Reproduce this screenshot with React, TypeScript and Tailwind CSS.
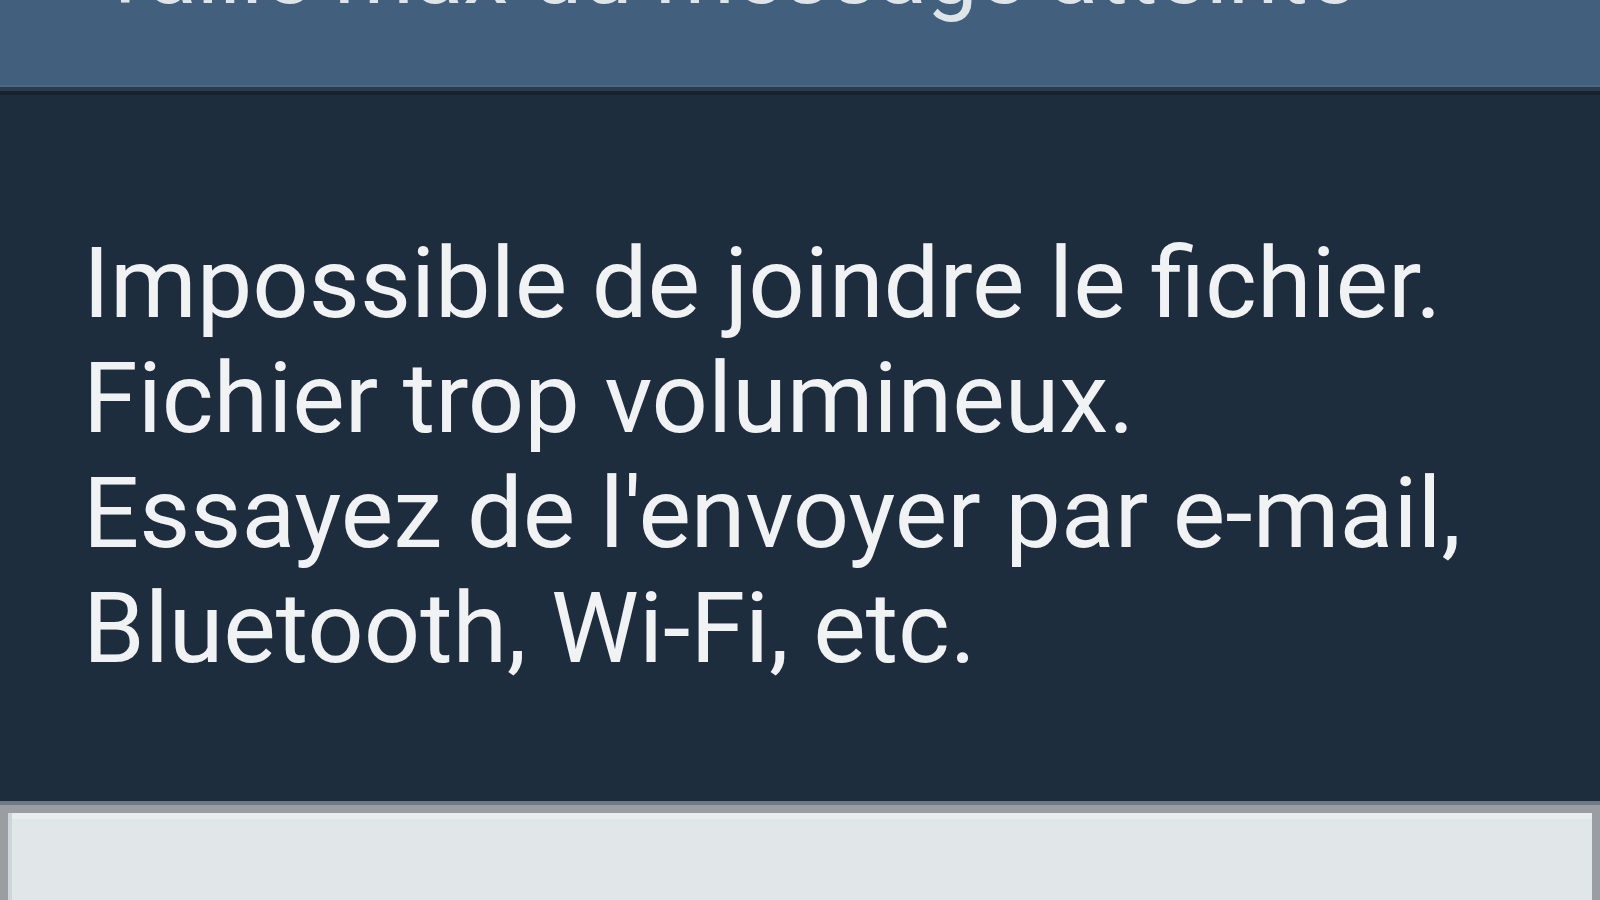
import React from 'react';

export default function App() {
  return (
    <div className="w-[1600px] h-[900px] overflow-hidden flex flex-col bg-[#1e2d3d] font-['Roboto',sans-serif]">
      {/* Dialog title bar (cut off at the top of the shot) */}
      <div className="h-[85px] shrink-0 bg-[#42607d] overflow-hidden">
        <div className="mt-[-73px] pl-[98px] text-[91px] leading-none text-[#dfe4e9] whitespace-nowrap">
          Taille max du message atteinte
        </div>
      </div>
      <div className="h-[2px] shrink-0 bg-[#4c6a88]" />
      <div className="h-[4px] shrink-0 bg-[#2a3b4c]" />
      <div className="h-[4px] shrink-0 bg-[#17222c]" />

      {/* Message body */}
      <div className="h-[706px] shrink-0 pt-[131px] pl-[83px] text-[99px] leading-[115px] text-[#f0f2f4] whitespace-nowrap">
        <p>Impossible de joindre le fichier.</p>
        <p>Fichier trop volumineux.</p>
        <p>Essayez de l'envoyer par e-mail,</p>
        <p>Bluetooth, Wi-Fi, etc.</p>
      </div>

      {/* Button area */}
      <div className="h-[4px] shrink-0 bg-[#6e7a86]" />
      <div className="flex-1 flex flex-col bg-[#9a9ea3] pt-[8px] px-[8px]">
        <div className="flex-1 flex border-l-4 border-[#cfd4d8] bg-[#e1e6e9]">
          <div className="flex-1 border-t-[6px] border-[#e9edf0]" />
        </div>
      </div>
    </div>
  );
}
